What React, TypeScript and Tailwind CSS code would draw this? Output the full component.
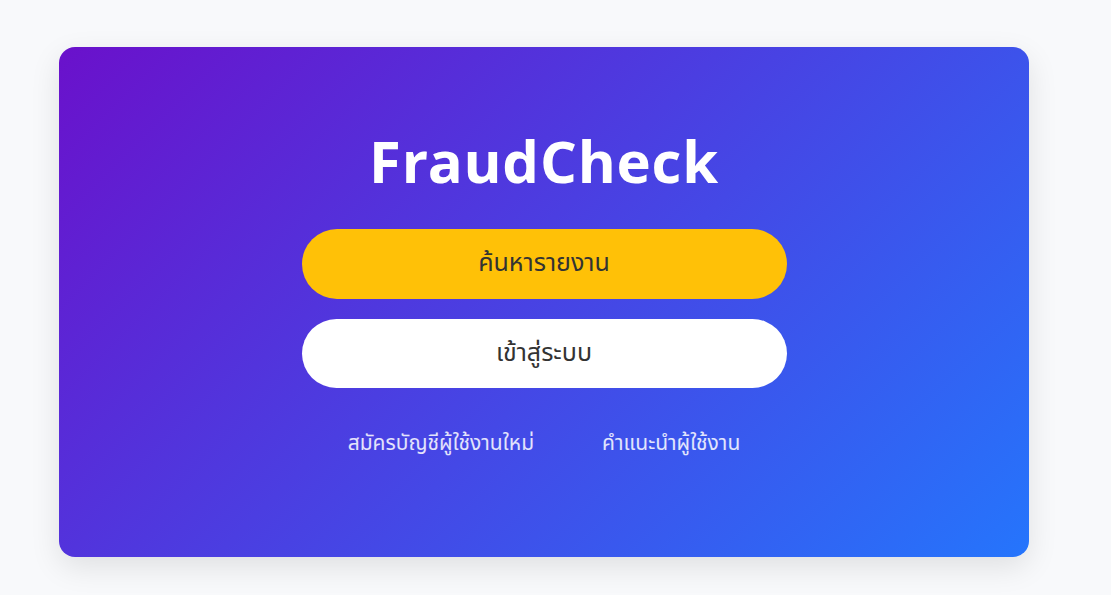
export default function App() {
  return (
    <div className="min-h-[595px] w-full bg-[#f8f9fb] pl-[59px] pt-[47px]" style={{ fontFamily: '"Noto Sans Thai", "Noto Sans", "Liberation Sans", sans-serif' }}>
      <div className="flex h-[510px] w-[970px] flex-col items-center rounded-[16px] bg-[linear-gradient(135deg,#6a11cb_0%,#2575fc_100%)] pt-[89px] shadow-[0_10px_30px_rgba(0,0,0,0.1)]">
        <h1 className="text-[58px] font-bold leading-[1] text-white tracking-[0.8px]">FraudCheck</h1>
        <div className="mt-[35px] flex w-[485px] flex-col gap-[20px]">
          <button className="flex h-[70px] items-center justify-center rounded-full bg-[#ffc107] text-[25px] text-[#333]">ค้นหารายงาน</button>
          <button className="flex h-[69px] items-center justify-center rounded-full bg-white text-[25px] text-[#333]">เข้าสู่ระบบ</button>
        </div>
        <div className="mt-[40px] flex gap-[68px] text-[21px] text-white/85">
          <span>สมัครบัญชีผู้ใช้งานใหม่</span>
          <span>คำแนะนำผู้ใช้งาน</span>
        </div>
      </div>
    </div>
  );
}
